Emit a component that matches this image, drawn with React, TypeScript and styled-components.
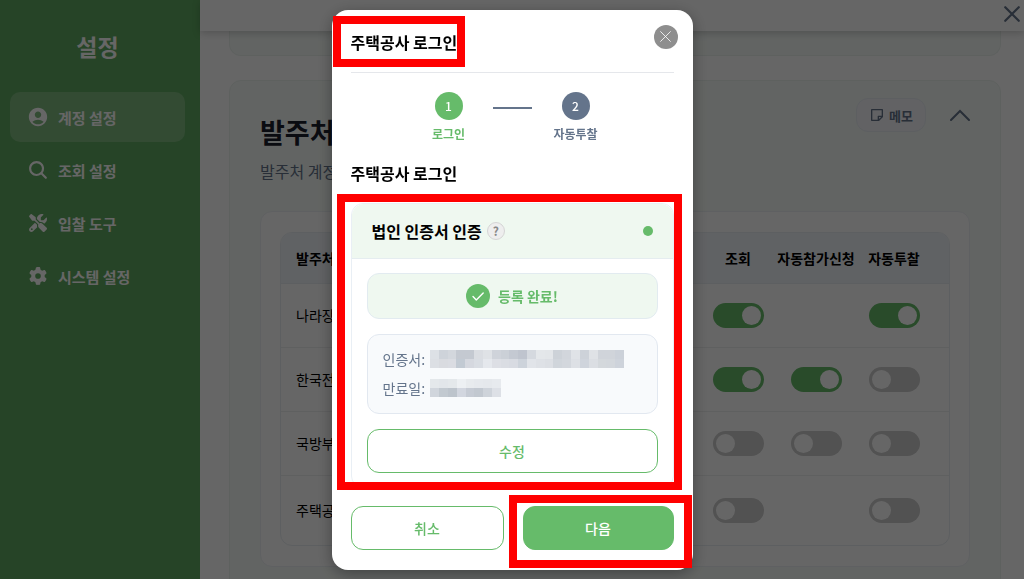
import React from "react";
import styled, { createGlobalStyle, css } from "styled-components";
import { MdAccountCircle } from "react-icons/md";
import { IoSearch } from "react-icons/io5";
import { RiStickyNoteLine } from "react-icons/ri";
import { FaGear, FaScrewdriverWrench } from "react-icons/fa6";

const Global = createGlobalStyle`
  *, *::before, *::after { box-sizing: border-box; }
  body { margin: 0; font-family: "Noto Sans CJK KR", "Noto Sans", sans-serif; color: #000; }
  h1, h2, h3, p { margin: 0; }
  button { font-family: inherit; cursor: pointer; }
`;

const Page = styled.div`
  display: flex;
  height: 100vh;
  overflow: hidden;
  background: #fff;
`;

const Sidebar = styled.aside`
  flex: 0 0 200px;
  padding: 28px 15px 20px 10px;
  background: #5faa61;
  color: #fff;
`;

const SidebarTitle = styled.h1`
  font-size: 23px;
  line-height: 36px;
  text-align: center;
`;

const Nav = styled.nav`
  display: flex;
  flex-direction: column;
  gap: 3px;
  margin-top: 28px;
`;

const NavLink = styled.a<{ $active?: boolean }>`
  display: flex;
  align-items: center;
  gap: 9px;
  height: 50px;
  padding: 0 17px;
  border-radius: 10px;
  font-size: 15px;
  font-weight: 700;
  color: #fff;
  text-decoration: none;
  background: ${(p) => (p.$active ? "rgba(255, 255, 255, 0.2)" : "transparent")};
`;

const NavIcon = styled.span`
  display: flex;
  align-items: center;
  justify-content: center;
  width: 22px;
  height: 22px;
`;

const Main = styled.main`
  display: flex;
  flex: 1;
  flex-direction: column;
  min-width: 0;
`;

const TopBar = styled.header`
  position: relative;
  display: flex;
  flex: 0 0 31px;
  justify-content: flex-end;
  align-items: center;
  padding: 0 3px 3px;
  background: #fff;
  box-shadow: 0 2px 8px rgba(0, 0, 0, 0.2);
`;

const IconButton = styled.button`
  display: flex;
  align-items: center;
  justify-content: center;
  padding: 0;
  border: 0;
  background: none;
  color: #64748b;
`;

const Content = styled.div`
  flex: 1;
  min-height: 0;
  padding: 0 23px 0 29px;
  overflow: hidden;
`;

const PreviousCard = styled.section`
  height: 25px;
  margin-bottom: 24px;
  border: 1px solid #ebf2ee;
  border-top: 0;
  border-radius: 0 0 12px 12px;
  background: #f6fbf8;
`;

const AccountCard = styled.section`
  padding: 17px 30px 30px;
  border: 1px solid #ebf2ee;
  border-radius: 12px;
  background: #f6fbf8;
`;

const AccountHead = styled.div`
  display: flex;
  align-items: flex-start;
  justify-content: space-between;
`;

const AccountTitle = styled.h2`
  padding-top: 14px;
  font-size: 27px;
  line-height: 40px;
  color: #1a202c;
`;

const AccountNote = styled.p`
  margin-top: 7px;
  font-size: 16px;
  line-height: 24px;
  color: #64748b;
`;

const AccountActions = styled.div`
  display: flex;
  align-items: center;
  gap: 24px;
`;

const MemoButton = styled.button`
  display: flex;
  align-items: center;
  gap: 4px;
  height: 34px;
  padding: 0 12px;
  border: 1px solid #e8edf3;
  border-radius: 12px;
  background: #f4f6fb;
  font-size: 13px;
  font-weight: 700;
  color: #64748b;
`;

const TablePanel = styled.div`
  margin-top: 28px;
  padding: 20px 19px;
  border: 1px solid #edf1f5;
  border-radius: 12px;
  background: #fff;
`;

const TableFrame = styled.div`
  overflow: hidden;
  border: 1px solid #e9eef3;
  border-radius: 12px;
`;

const Table = styled.table`
  width: 100%;
  border-collapse: collapse;
  table-layout: fixed;
  font-size: 14px;
  line-height: 20px;
`;

const HeadCell = styled.th<{ $name?: boolean; $last?: boolean }>`
  width: ${(p) => (p.$name ? "auto" : p.$last ? "94px" : "78px")};
  height: 50px;
  padding: ${(p) => (p.$name ? "0 15px" : p.$last ? "0 16px 0 0" : "0")};
  border-bottom: 1px solid #e9eef3;
  background: #f1f5f9;
  text-align: ${(p) => (p.$name ? "left" : "center")};
  white-space: nowrap;
`;

const Cell = styled.td<{ $name?: boolean; $last?: boolean; $tall?: boolean }>`
  height: ${(p) => (p.$tall ? "70px" : "64px")};
  padding: ${(p) => (p.$name ? "0 15px" : p.$last ? "0 16px 0 0" : "0")};
  border-bottom: ${(p) => (p.$tall ? "0" : "1px solid #eeeff0")};
  text-align: ${(p) => (p.$name ? "left" : "center")};
`;

const Switch = styled.input`
  appearance: none;
  display: block;
  width: 51px;
  height: 25px;
  margin: 0 auto;
  padding: 3px;
  border-radius: 13px;
  background: #ccc;

  &::before {
    content: "";
    display: block;
    width: 19px;
    height: 19px;
    border-radius: 50%;
    background: #fff;
  }

  &:checked {
    background: #66bb6a;
  }

  &:checked::before {
    margin-left: auto;
  }
`;

const Backdrop = styled.div`
  position: fixed;
  inset: 0;
  display: flex;
  align-items: center;
  justify-content: center;
  background: rgba(0, 0, 0, 0.6);
`;

const Dialog = styled.div`
  position: relative;
  width: 361px;
  padding: 20px 19px;
  border-radius: 16px;
  background: #fff;
  box-shadow: 0 4px 16px rgba(0, 0, 0, 0.35);
`;

const marker = css`
  content: "";
  position: absolute;
  z-index: 1;
  border: 8px solid #f00;
  pointer-events: none;
`;

const DialogHead = styled.div`
  display: flex;
  padding-bottom: 18px;
  border-bottom: 1px solid #e5e7eb;
`;

const DialogTitle = styled.h2`
  position: relative;
  font-size: 16px;
  line-height: 24px;

  &::after {
    ${marker}
    inset: -14px -8px -13px -18px;
  }
`;

const CloseButton = styled.button`
  position: absolute;
  top: 15px;
  right: 15px;
  display: flex;
  align-items: center;
  justify-content: center;
  width: 24px;
  height: 24px;
  padding: 0;
  border: 0;
  border-radius: 50%;
  background: #8e8e8e;
  color: #fff;
`;

const Steps = styled.ol`
  display: flex;
  justify-content: center;
  margin: 19px 0 0;
  padding: 0;
  list-style: none;
`;

const Step = styled.li<{ $active?: boolean }>`
  display: flex;
  flex-direction: column;
  align-items: center;
  gap: 5px;
  width: 88px;
  font-size: 12px;
  font-weight: 700;
  line-height: 18px;
  color: ${(p) => (p.$active ? "#66bb6a" : "#64748b")};
`;

const StepNumber = styled.span<{ $active?: boolean }>`
  display: flex;
  align-items: center;
  justify-content: center;
  width: 28px;
  height: 28px;
  border-radius: 50%;
  background: ${(p) => (p.$active ? "#66bb6a" : "#64748b")};
  font-weight: 500;
  color: #fff;
`;

const StepLine = styled.li`
  width: 39px;
  height: 2px;
  margin-top: 15px;
  background: #64748b;
`;

const SectionTitle = styled.h3`
  margin: 18px 0;
  font-size: 16px;
  line-height: 24px;
`;

const CertCard = styled.section`
  position: relative;
  border: 1px solid #e9eff5;
  border-radius: 12px;

  &::after {
    ${marker}
    inset: -10px -9px -3px -15px;
  }
`;

const CertHead = styled.div`
  display: flex;
  align-items: center;
  gap: 5px;
  height: 55px;
  padding: 0 20px;
  border-bottom: 1px solid #e5edf0;
  border-radius: 12px 12px 0 0;
  background: #eff8f0;
`;

const CertTitle = styled.h3`
  font-size: 16px;
  line-height: 24px;
`;

const HelpButton = styled.button`
  width: 18px;
  height: 18px;
  padding: 0;
  border: 1px solid #d5d5d5;
  border-radius: 50%;
  background: #eee;
  font-size: 12px;
  font-weight: 700;
  line-height: 16px;
  color: #888;
`;

const StatusDot = styled.span`
  width: 10px;
  height: 10px;
  margin-left: auto;
  border-radius: 50%;
  background: #66bb6a;
`;

const CertBody = styled.div`
  display: flex;
  flex-direction: column;
  gap: 15px;
  padding: 14px 15px;
`;

const Done = styled.p`
  display: flex;
  align-items: center;
  justify-content: center;
  gap: 8px;
  height: 46px;
  border: 1px solid #e2ebf0;
  border-radius: 12px;
  background: #eff8f0;
  font-size: 14px;
  font-weight: 700;
  color: #66bb6a;
`;

const Details = styled.dl`
  display: grid;
  grid-template-columns: auto 1fr;
  align-items: center;
  column-gap: 5px;
  margin: 0;
  padding: 10px 15px;
  border: 1px solid #e2e8f0;
  border-radius: 12px;
  background: #f8fafc;
  font-size: 14px;
  line-height: 29px;
  color: #64748b;
`;

const DetailValue = styled.dd`
  display: flex;
  margin: 0;
`;

const ActionButton = styled.button<{ $filled?: boolean }>`
  flex: 1;
  min-height: 44px;
  padding: 0;
  border: 1px solid #66bb6a;
  border-radius: 12px;
  background: ${(p) => (p.$filled ? "#66bb6a" : "#fff")};
  font-size: 14px;
  font-weight: 500;
  line-height: 20px;
  color: ${(p) => (p.$filled ? "#fff" : "#66bb6a")};
`;

const Footer = styled.div`
  display: flex;
  gap: 19px;
  margin-top: 18px;
`;

const NextSlot = styled.div`
  position: relative;
  display: flex;
  flex: 1;

  &::after {
    ${marker}
    inset: -11px -18px -18px -14px;
  }
`;

const certCells = [
  ["#dde1e6", "#ced3da", "#d3d7dd", "#c4c9d1", "#c4c9d1", "#dadde2", "#dfe2e6", "#cfd3da", "#cbd0d7", "#c4c9d2", "#bfc4ce", "#d5d9df", "#e4e7ea", "#e3e6e9", "#cdd2d8", "#d2d6dc", "#e0e3e7", "#cdd2d9", "#dfe2e6", "#d0d4da", "#d0d4da", "#ccd1d9"],
  ["#dcdfe4", "#d9dbe0", "#dadce2", "#c2cad3", "#d5d8df", "#d9dde3", "#e5e8ed", "#dddfe5", "#dadde3", "#d8dbe2", "#cdd3db", "#e1e4e9", "#dee1e6", "#dcdfe4", "#d0d5db", "#d3d7dd", "#dde0e5", "#cfd4dc", "#dbdee3", "#d4d8dc", "#d3d7dc", "#ced3db"],
];

const expiryCells = [
  ["#e4e8eb", "#e2e6ea", "#e4e8eb", "#edf0f3", "#e8ebee", "#e6e9ed", "#e5e8ec", "#e7eaee"],
  ["#d0d5dc", "#c2c9d0", "#bdc4cc", "#d2d6df", "#c6cbd4", "#c2c8d0", "#ced3da", "#dde0e6"],
];

function Mosaic({ cells, width }: { cells: string[][]; width: number }) {
  const columns = cells[0].length;
  return (
    <svg width={width} height={18} viewBox={`0 0 ${columns} 2`} preserveAspectRatio="none" shapeRendering="crispEdges" aria-hidden="true">
      {cells.map((row, y) => row.map((fill, x) => <rect key={`${x}-${y}`} x={x} y={y} width={1} height={1} fill={fill} />))}
    </svg>
  );
}

function Cross({ size, stroke }: { size: number; stroke: number }) {
  return (
    <svg width={size} height={size} viewBox="0 0 16 16" fill="none" stroke="currentColor" strokeWidth={stroke} strokeLinecap="round" aria-hidden="true">
      <path d="M2 2 14 14M14 2 2 14" />
    </svg>
  );
}

const navItems = [
  { label: "계정 설정", icon: <MdAccountCircle size={22} />, active: true },
  { label: "조회 설정", icon: <IoSearch size={22} /> },
  { label: "입찰 도구", icon: <FaScrewdriverWrench size={18} /> },
  { label: "시스템 설정", icon: <FaGear size={18} /> },
];

const columns = ["조회", "자동참가신청", "자동투찰"];

const agencies: { name: string; switches: (boolean | null)[] }[] = [
  { name: "나라장터", switches: [true, null, true] },
  { name: "한국전력", switches: [true, true, false] },
  { name: "국방부", switches: [false, false, false] },
  { name: "주택공사", switches: [false, null, false] },
];

export default function App() {
  return (
    <>
      <Global />
      <Page>
        <Sidebar>
          <SidebarTitle>설정</SidebarTitle>
          <Nav>
            {navItems.map((item) => (
              <NavLink key={item.label} href="#" $active={item.active}>
                <NavIcon>{item.icon}</NavIcon>
                {item.label}
              </NavLink>
            ))}
          </Nav>
        </Sidebar>
        <Main>
          <TopBar>
            <IconButton aria-label="설정 닫기">
              <Cross size={18} stroke={2} />
            </IconButton>
          </TopBar>
          <Content>
            <PreviousCard />
            <AccountCard>
              <AccountHead>
                <div>
                  <AccountTitle>발주처</AccountTitle>
                  <AccountNote>발주처 계정</AccountNote>
                </div>
                <AccountActions>
                  <MemoButton>
                    <RiStickyNoteLine size={16} />
                    메모
                  </MemoButton>
                  <IconButton aria-label="접기">
                    <svg width="20" height="12" viewBox="0 0 20 12" fill="none" stroke="currentColor" strokeWidth="2" strokeLinecap="round" aria-hidden="true">
                      <path d="M1 11 10 2 19 11" />
                    </svg>
                  </IconButton>
                </AccountActions>
              </AccountHead>
              <TablePanel>
                <TableFrame>
                  <Table>
                    <thead>
                      <tr>
                        <HeadCell $name>발주처</HeadCell>
                        {columns.map((c, i) => (
                          <HeadCell key={c} $last={i === 2}>{c}</HeadCell>
                        ))}
                      </tr>
                    </thead>
                    <tbody>
                      {agencies.map((a, r) => (
                        <tr key={a.name}>
                          <Cell $name $tall={r === 3}>{a.name}</Cell>
                          {a.switches.map((on, i) => (
                            <Cell key={i} $last={i === 2} $tall={r === 3}>
                              {on !== null && <Switch type="checkbox" role="switch" aria-label={`${a.name} ${columns[i]}`} defaultChecked={on} />}
                            </Cell>
                          ))}
                        </tr>
                      ))}
                    </tbody>
                  </Table>
                </TableFrame>
              </TablePanel>
            </AccountCard>
          </Content>
        </Main>
      </Page>
      <Backdrop>
        <Dialog role="dialog" aria-modal="true" aria-labelledby="dialog-title">
          <DialogHead>
            <DialogTitle id="dialog-title">주택공사 로그인</DialogTitle>
            <CloseButton aria-label="닫기">
              <Cross size={13} stroke={1} />
            </CloseButton>
          </DialogHead>
          <Steps>
            <Step $active>
              <StepNumber $active>1</StepNumber>
              로그인
            </Step>
            <StepLine aria-hidden="true" />
            <Step>
              <StepNumber>2</StepNumber>
              자동투찰
            </Step>
          </Steps>
          <SectionTitle>주택공사 로그인</SectionTitle>
          <CertCard>
            <CertHead>
              <CertTitle>법인 인증서 인증</CertTitle>
              <HelpButton aria-label="도움말">?</HelpButton>
              <StatusDot />
            </CertHead>
            <CertBody>
              <Done>
                <svg width="24" height="24" viewBox="0 0 24 24" fill="none" aria-hidden="true">
                  <circle cx="12" cy="12" r="12" fill="#66bb6a" />
                  <path d="M7 12.5 10.3 16 17.2 9" stroke="#fff" strokeWidth="1.4" strokeLinecap="round" strokeLinejoin="round" />
                </svg>
                등록 완료!
              </Done>
              <Details>
                <dt>인증서:</dt>
                <DetailValue><Mosaic cells={certCells} width={194} /></DetailValue>
                <dt>만료일:</dt>
                <DetailValue><Mosaic cells={expiryCells} width={71} /></DetailValue>
              </Details>
              <ActionButton>수정</ActionButton>
            </CertBody>
          </CertCard>
          <Footer>
            <ActionButton>취소</ActionButton>
            <NextSlot>
              <ActionButton $filled>다음</ActionButton>
            </NextSlot>
          </Footer>
        </Dialog>
      </Backdrop>
    </>
  );
}
